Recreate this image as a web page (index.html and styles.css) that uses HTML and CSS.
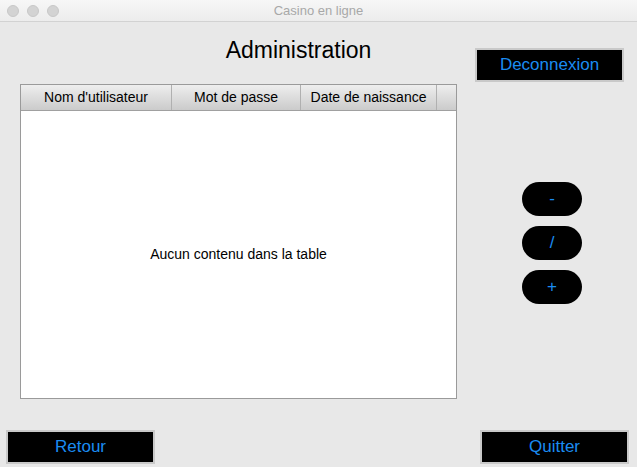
FILE: index.html
```html
<!DOCTYPE html>
<html>
<head>
<meta charset="utf-8">
<link rel="stylesheet" href="styles.css">
</head>
<body>
<div class="window">
  <div class="titlebar">
    <div class="lights"><span class="light"></span><span class="light"></span><span class="light"></span></div>
    <div class="wtitle">Casino en ligne</div>
  </div>
  <div class="main">
    <div class="left">
      <h1 class="title">Administration</h1>
      <div class="table">
        <div class="thead">
          <div class="th c1">Nom d'utilisateur</div>
          <div class="th c2">Mot de passe</div>
          <div class="th c3">Date de naissance</div>
          <div class="th c4"></div>
        </div>
        <div class="tbody">Aucun contenu dans la table</div>
      </div>
    </div>
    <div class="right">
      <button class="btn">Deconnexion</button>
      <div class="pills">
        <button class="pill">-</button>
        <button class="pill">/</button>
        <button class="pill">+</button>
      </div>
    </div>
  </div>
  <div class="bottom">
    <button class="btn">Retour</button>
    <button class="btn">Quitter</button>
  </div>
</div>
</body>
</html>
```
FILE: styles.css
```css
* { box-sizing: border-box; }
html, body { margin: 0; padding: 0; }
body {
  width: 637px;
  height: 467px;
  overflow: hidden;
  background: #e8e8e8;
  font-family: "Liberation Sans", Arial, sans-serif;
}
.window {
  width: 637px;
  height: 467px;
  display: flex;
  flex-direction: column;
  padding-bottom: 3px;
}
.titlebar {
  height: 22px;
  background: linear-gradient(#f7f7f7, #ececec);
  border-bottom: 1px solid #d2d2d2;
  display: flex;
  align-items: center;
  position: relative;
}
.lights {
  display: flex;
  gap: 8px;
  padding-left: 7px;
}
.light {
  width: 12px;
  height: 12px;
  border-radius: 50%;
  background: #d3d3d3;
  border: 1px solid #c8c8c8;
}
.wtitle {
  position: absolute;
  left: 0;
  right: 0;
  top: 0;
  line-height: 22px;
  text-align: center;
  font-size: 13px;
  color: #a8a8a8;
}
.main {
  display: flex;
}
.left {
  margin-left: 20px;
  width: 437px;
}
.title {
  margin: 15px 0 0 0;
  padding-left: 120px;
  text-align: center;
  font-size: 23px;
  font-weight: normal;
  line-height: 27px;
  color: #000;
}
.table {
  margin-top: 20px;
  height: 315px;
  border: 1px solid #9a9a9a;
  background: #fff;
  display: flex;
  flex-direction: column;
}
.thead {
  display: flex;
  height: 26px;
  background: linear-gradient(#eeeeee, #cbcbcb);
  border-bottom: 1px solid #a0a0a0;
}
.th {
  font-size: 14px;
  line-height: 25px;
  text-align: center;
  color: #000;
  border-right: 1px solid #b0b0b0;
}
.c1 { width: 151px; }
.c2 { width: 129px; }
.c3 { width: 136px; }
.c4 { flex: 1; border-right: none; }
.tbody {
  flex: 1;
  display: flex;
  align-items: center;
  justify-content: center;
  font-size: 14px;
  color: #000;
  padding-bottom: 1px;
}
.right {
  margin-left: 18px;
  padding-top: 26px;
  display: flex;
  flex-direction: column;
  align-items: flex-start;
}
.btn {
  width: 149px;
  height: 34px;
  background: #000;
  border: 2px solid #c9c9c9;
  color: #1a8cf2;
  font-family: "Liberation Sans", Arial, sans-serif;
  font-size: 17px;
  padding: 0;
  margin: 0;
  line-height: 30px;
}
.pills {
  margin-top: 100px;
  margin-left: 47px;
  display: flex;
  flex-direction: column;
  gap: 10px;
}
.pill {
  width: 60px;
  height: 34px;
  border-radius: 17px;
  background: #000;
  border: none;
  color: #1a8cf2;
  font-family: "Liberation Sans", Arial, sans-serif;
  font-size: 17px;
  padding: 0;
  margin: 0;
}
.bottom {
  margin-top: auto;
  display: flex;
  justify-content: space-between;
  padding: 0 8px 0 6px;
}
```
